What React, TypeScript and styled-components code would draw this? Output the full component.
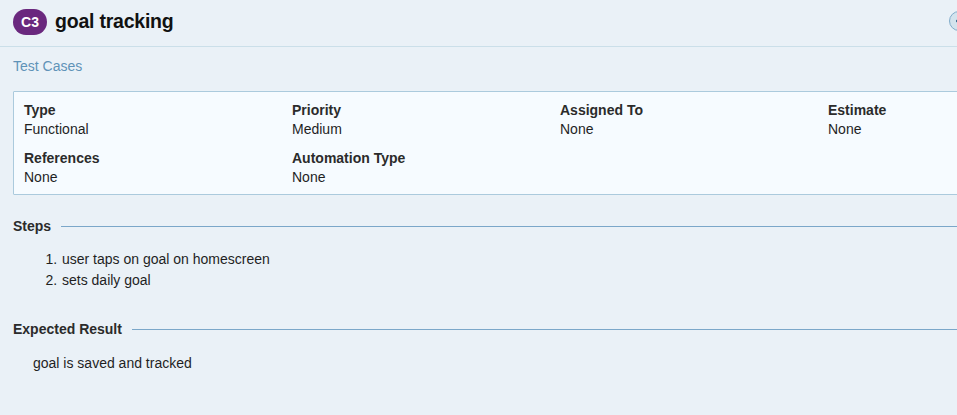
import React from "react";
import styled, { createGlobalStyle } from "styled-components";

const GlobalStyle = createGlobalStyle`
  * { box-sizing: border-box; }
  body {
    margin: 0;
    overflow: hidden;
    background: #eaf1f7;
    color: #1f1f1f;
    font-family: "Liberation Sans", Arial, sans-serif;
    font-size: 14px;
    line-height: 19px;
  }
`;

const Page = styled.div`
  height: 415px;
  overflow: hidden;
`;

const Header = styled.header`
  display: flex;
  align-items: center;
  width: 982px;
  height: 47px;
  padding: 0 13px 3px;
  border-bottom: 1px solid #cbdfe9;
`;

const Badge = styled.span`
  display: flex;
  align-items: center;
  justify-content: center;
  width: 34px;
  height: 26px;
  padding-top: 2px;
  border-radius: 13px;
  background: #6a287e;
  color: #fff;
  font-size: 14px;
  font-weight: bold;
`;

const Title = styled.h1`
  flex: 1;
  margin: 0 0 2px 8px;
  color: #111;
  font-size: 19.5px;
  letter-spacing: -0.22px;
  line-height: 24px;
`;

const RoundButton = styled.button`
  display: flex;
  align-items: center;
  justify-content: center;
  width: 20px;
  height: 20px;
  margin-bottom: 2px;
  padding: 0;
  border: 1px solid #82acca;
  border-radius: 50%;
  background: #d3e3ed;
  color: #2d5f83;
`;

const Crumb = styled.a`
  display: block;
  margin: 10px 13px 0;
  color: #5f93b8;
`;

const Details = styled.dl`
  display: grid;
  grid-template-columns: repeat(4, 268px);
  row-gap: 10px;
  width: 1094px;
  height: 104px;
  margin: 15px 0 0 13px;
  padding: 9px 10px;
  border: 1px solid #abcadd;
  border-radius: 1px;
  background: #f6fbff;
`;

const Label = styled.dt`
  color: #2b2b2b;
  font-weight: bold;
`;

const Value = styled.dd`
  margin: 0;
`;

const Heading = styled.h2<{ $top: number }>`
  display: flex;
  align-items: center;
  gap: 10px;
  margin: ${(p) => p.$top}px 0 0 13px;
  color: #2b2b2b;
  font-size: 14px;
  line-height: 19px;

  &::after {
    content: "";
    flex: 1;
    height: 1px;
    background: #7ba7c9;
  }
`;

const Steps = styled.ol`
  margin: 13px 0 0 13px;
  padding-left: 48px;
  line-height: 21px;
`;

const Step = styled.li`
  padding-left: 1px;
`;

const Text = styled.p`
  margin: 15px 0 0 33px;
`;

const details = [
  ["Type", "Functional"],
  ["Priority", "Medium"],
  ["Assigned To", "None"],
  ["Estimate", "None"],
  ["References", "None"],
  ["Automation Type", "None"],
];

export default function App() {
  return (
    <Page>
      <GlobalStyle />
      <Header>
        <Badge>C3</Badge>
        <Title>goal tracking</Title>
        <RoundButton aria-label="Previous">
          <svg width="6" height="8" viewBox="0 0 6 8" fill="none" stroke="currentColor" strokeWidth="2">
            <path d="M6 4H1M4 1L1 4l3 3" />
          </svg>
        </RoundButton>
      </Header>
      <Crumb>Test Cases</Crumb>
      <Details>
        {details.map(([label, value]) => (
          <div key={label}>
            <Label>{label}</Label>
            <Value>{value}</Value>
          </div>
        ))}
      </Details>
      <Heading $top={22}>Steps</Heading>
      <Steps>
        <Step>user taps on goal on homescreen</Step>
        <Step>sets daily goal</Step>
      </Steps>
      <Heading $top={29}>Expected Result</Heading>
      <Text>goal is saved and tracked</Text>
    </Page>
  );
}
